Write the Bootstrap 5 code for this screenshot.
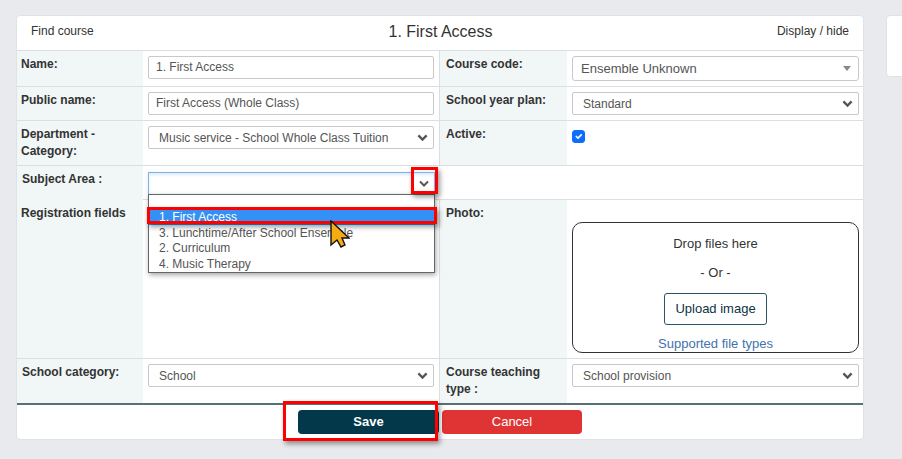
<!DOCTYPE html>
<html lang="en">
<head>
<meta charset="utf-8">
<title>First Access</title>
<link href="https://cdn.jsdelivr.net/npm/bootstrap@5.3.0/dist/css/bootstrap.min.css" rel="stylesheet">
<style>
html,body{height:100%;overflow:hidden}
body{background:#e9eaee;font-family:"Liberation Sans",Arial,sans-serif;font-size:12px;color:#333}
.page-wrap{padding:15px 0 0 16px;gap:22px;width:902px}
.main-panel{width:848px;flex:none;height:425px;border:1px solid #dfe2e6;border-radius:4px;background:#fff;box-sizing:border-box}
.side-panel{width:60px;flex:none;height:62px;background:#fff;border:1px solid #dfe2e6;border-radius:4px}
.panel-head{height:35px;border-bottom:1px solid #dcdfe2;padding:0 14px 0 14px;position:relative;line-height:30px}
.panel-title{position:absolute;left:1px;right:0;text-align:center;font-size:16px;top:0;line-height:31px;color:#333}
.form-line{display:grid;grid-template-columns:126px 297px 127px 1fr;border-bottom:1px solid #dcdfe2;box-sizing:border-box}
.h-a{height:36px}.h-b{height:34px}.h-c{height:45px}.h-d{height:159px}.h-e{height:44px;border-bottom:0}
.cell-label{background:#f1f6f7;font-weight:700;line-height:17px;padding:5px 4px 0 4px;font-size:12px;color:#333}
.cell-label.shift{padding-left:5px}
.cell-label.shift-r{padding-left:6px}
.cell-field{padding:5px;border-right:1px solid #dcdfe2;position:relative}
.cell-end{padding:5px 4px 0 5px;position:relative}
.no-rule{border-right:0}
.fld{height:23px;min-height:23px;border:1px solid #c9c9c9;border-radius:2px;font-size:12px;color:#555;padding:0 7px 1px;line-height:20px;box-shadow:none;font-family:inherit}
select.fld{padding:2px 24px 0 10px;line-height:19px;background-position:right 5px center;background-size:11px 11px;background-image:url("data:image/svg+xml,%3csvg xmlns='http://www.w3.org/2000/svg' viewBox='0 0 16 16'%3e%3cpath fill='none' stroke='%23555' stroke-width='3.4' d='M2 5l6 6 6-6'/%3e%3c/svg%3e")}
.combo{height:25px;border:1px solid #c9c9c9;border-radius:3px;font-size:13px;color:#555;padding:0 8px;display:flex;align-items:center;justify-content:space-between}
.tri{width:0;height:0;border-left:4px solid transparent;border-right:4px solid transparent;border-top:5px solid #888;margin-right:-1px}
.check-box{width:13px;height:13px;margin:4px 0 0 0;border-radius:2px;background-color:#0d6efd;border-color:#0d6efd}
.subj-box{height:23px;border:1px solid #7db5e8;background:#fff;margin-top:1px;box-shadow:inset 0 2px 3px rgba(90,150,210,.2),0 1px 5px rgba(90,150,210,.2);display:flex;justify-content:flex-end;align-items:center;padding-right:4px;width:287px}
.opt-list{position:absolute;left:5px;top:28px;width:287px;height:79px;background:#fff;border:1px solid #666;box-shadow:1px 2px 5px rgba(0,0,0,.35);z-index:3;color:#555;font-size:12px;line-height:16px;padding-top:14px}
.opt{padding-left:10px;height:15.7px;white-space:nowrap}
.opt.on{background:#3390f5;color:#fff}
.mark-red{position:absolute;border:3px solid #f00;box-shadow:2px 3px 5px rgba(0,0,0,.4);z-index:4}
.mark-arrow{left:268px;top:1px;width:27px;height:27px}
.mark-opt{left:4px;top:41px;width:290px;height:17px}
.mark-save{left:266px;top:-4px;width:155px;height:40px}
.ptr{position:absolute;left:187px;top:54px;z-index:5}
.drop-zone{border:1px solid #333;border-radius:10px;height:131px;margin-top:17px;font-size:13px;text-align:center;color:#333;width:287px}
.drop-a{padding-top:12px;line-height:17px}
.drop-b{margin-top:12px;line-height:17px}
.up-btn{font-size:13px;width:103px;height:32px;border:1px solid #2a5566;border-radius:3px;padding:0;color:#0d3345;margin-top:12px;line-height:30px}
.file-link{color:#3f72b0;text-decoration:none;display:block;margin-top:10px;line-height:17px}
.panel-foot{border-top:2px solid #557078;height:34px;padding-top:5px;gap:3px;position:relative}
.save-btn,.cancel-btn{height:24px;border:0;border-radius:4px;font-size:13px;color:#fff;padding:0;line-height:24px}
.save-btn{width:141px;background:#03384a;font-weight:700}
.cancel-btn{width:140px;background:#e03434}
.save-btn:hover{background:#03384a;color:#fff}.cancel-btn:hover{background:#e03434;color:#fff}
</style>
</head>
<body>
<div class="d-flex align-items-start page-wrap">
  <div class="main-panel">
    <div class="panel-head d-flex justify-content-between">
      <span class="panel-title">1. First Access</span>
      <span class="position-relative">Find course</span>
      <span class="position-relative">Display / hide</span>
    </div>

    <div class="form-line h-a">
      <div class="cell-label">Name:</div>
      <div class="cell-field"><input class="form-control fld" value="1. First Access"></div>
      <div class="cell-label shift-r">Course code:</div>
      <div class="cell-end"><div class="combo"><span>Ensemble Unknown</span><span class="tri"></span></div></div>
    </div>

    <div class="form-line h-b">
      <div class="cell-label">Public name:</div>
      <div class="cell-field"><input class="form-control fld" value="First Access (Whole Class)"></div>
      <div class="cell-label shift-r">School year plan:</div>
      <div class="cell-end"><select class="form-select fld"><option>Standard</option></select></div>
    </div>

    <div class="form-line h-c">
      <div class="cell-label">Department - Category:</div>
      <div class="cell-field"><select class="form-select fld"><option>Music service - School Whole Class Tuition</option></select></div>
      <div class="cell-label shift-r">Active:</div>
      <div class="cell-end"><input class="form-check-input check-box" type="checkbox" checked></div>
    </div>

    <div class="form-line h-b">
      <div class="cell-label shift">Subject Area :</div>
      <div class="cell-field no-rule">
        <div class="subj-box"><svg width="12" height="8" viewBox="0 0 12 8"><path d="M2 1.5 6 5.5 10 1.5" fill="none" stroke="#555" stroke-width="2"/></svg></div>
        <div class="opt-list">
          <div class="opt on">1. First Access</div>
          <div class="opt">3. Lunchtime/After School Ensemble</div>
          <div class="opt">2. Curriculum</div>
          <div class="opt">4. Music Therapy</div>
        </div>
        <span class="mark-red mark-arrow"></span>
        <span class="mark-red mark-opt"></span>
        <svg class="ptr" width="20" height="28" viewBox="0 0 20 28"><path d="M1 1 1 25 7 20 11 27 15 25 12 18 19 18Z" fill="#f5ac13" stroke="#111" stroke-width="1.4" stroke-linejoin="miter"/></svg>
      </div>
      <div></div><div></div>
    </div>

    <div class="form-line h-d">
      <div class="cell-label">Registration fields</div>
      <div class="cell-field"></div>
      <div class="cell-label shift-r">Photo:</div>
      <div class="cell-end">
        <div class="drop-zone">
          <div class="drop-a">Drop files here</div>
          <div class="drop-b">- Or -</div>
          <button class="btn up-btn" type="button">Upload image</button>
          <a class="file-link" href="#">Supported file types</a>
        </div>
      </div>
    </div>

    <div class="form-line h-e">
      <div class="cell-label shift">School category:</div>
      <div class="cell-field"><select class="form-select fld"><option>School</option></select></div>
      <div class="cell-label shift-r">Course teaching type :</div>
      <div class="cell-end"><select class="form-select fld"><option>School provision</option></select></div>
    </div>

    <div class="panel-foot d-flex justify-content-center">
      <button class="btn save-btn" type="button">Save</button>
      <button class="btn cancel-btn" type="button">Cancel</button>
      <span class="mark-red mark-save"></span>
    </div>
  </div>
  <div class="side-panel"></div>
</div>
<script src="https://cdn.jsdelivr.net/npm/bootstrap@5.3.0/dist/js/bootstrap.bundle.min.js"></script>
</body>
</html>
